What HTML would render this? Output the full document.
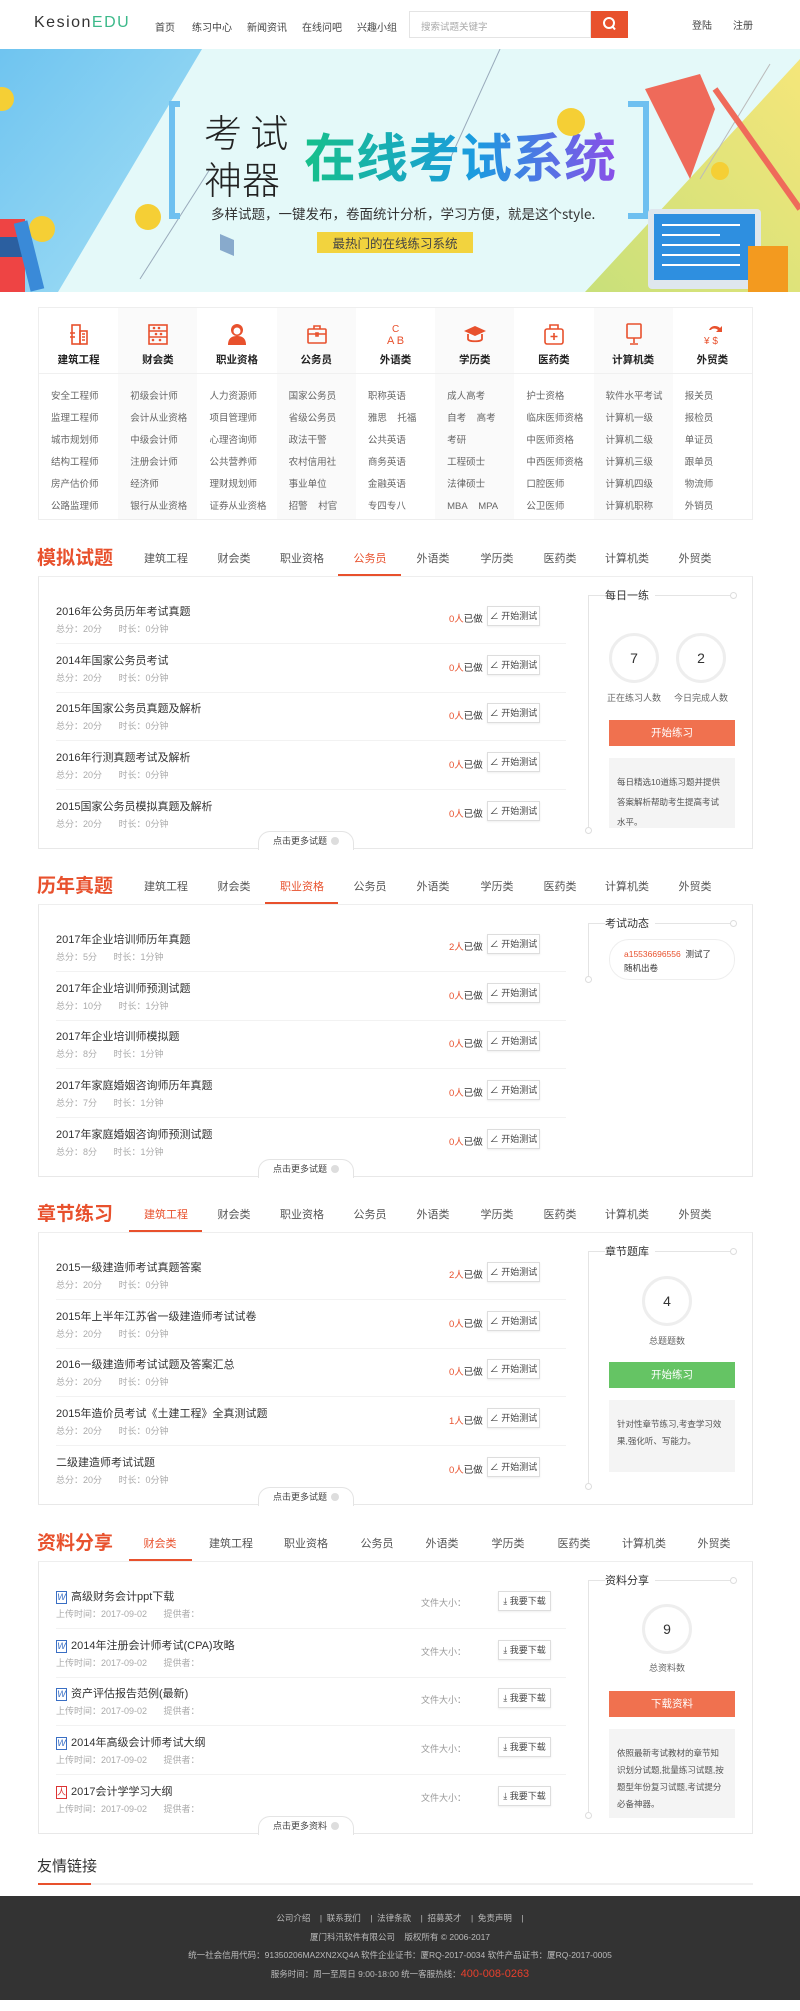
<!DOCTYPE html>
<html><head><meta charset="utf-8">
<style>
*{margin:0;padding:0;box-sizing:border-box}
body{width:800px;height:2011px;background:#fff;font-family:"Liberation Sans","Noto Sans CJK SC",sans-serif;position:relative;overflow:hidden;color:#333}
.a{position:absolute;white-space:nowrap}
.nav{font-size:10px;color:#444;top:19px}
.cat{position:absolute;top:307px;left:38px;width:715px;height:213px;border:1px solid #eee;display:flex}
.col{width:79.4px;height:100%;position:relative}
.col.s{background:#fafafa}
.col .ic{position:absolute;top:14px;left:28px;width:24px;height:24px}
.col .h{position:absolute;top:44px;width:100%;text-align:center;font-size:10.5px;font-weight:bold;color:#222}
.col .hr{position:absolute;top:65px;left:0;width:100%;height:1px;background:#f0f0f0}
.col ul{list-style:none;position:absolute;top:78px;left:12px;font-size:9.5px;color:#666;line-height:22px}
.sec{position:absolute;left:0;width:800px;height:300px}
.sec .t{position:absolute;left:37px;top:-33px;font-size:19px;font-weight:bold;color:#e8512d}
.sec .tab{position:absolute;top:-26px;font-size:11px;color:#555;transform:translateX(-50%)}
.sec .tab.on{color:#e8512d}
.sec .ul{position:absolute;top:-2px;height:2px;background:#e8512d}
.sec .box{position:absolute;left:38px;top:0;width:715px;height:273px;border:1px solid #e8e8e8;border-top-color:#eee}
.it{position:absolute;left:56px;width:510px;height:41px;border-bottom:1px solid #f2f2f2}
.it .n{position:absolute;left:0;top:0;font-size:11px;color:#333}
.it .m{position:absolute;left:0;top:19px;font-size:9px;color:#aaa;word-spacing:14px}
.it .c{position:absolute;left:393px;top:8px;font-size:9.5px;color:#333}
.it .c b{font-weight:normal;color:#e8512d}
.it .bt{position:absolute;left:431px;top:3px;width:53px;height:20px;border:1px solid #ddd;font-size:9px;color:#444;text-align:center;line-height:18px;box-shadow:0 1px 2px #eee}
.vl{position:absolute;left:588px;width:1px;background:#e4e4e4}
.rh{position:absolute;left:605px;font-size:11px;color:#333;background:#fff;padding-right:6px}
.hl{position:absolute;left:588px;width:145px;height:1px;background:#e4e4e4}
.dot{position:absolute;width:7px;height:7px;border:1px solid #ddd;border-radius:50%;background:#fff}
.cir{position:absolute;width:50px;height:50px;border:3px solid #eee;border-radius:50%;text-align:center;line-height:44px;font-size:14px;color:#333}
.lab{position:absolute;font-size:9px;color:#666;transform:translateX(-50%)}
.btn{position:absolute;left:609px;width:126px;height:26px;color:#fff;font-size:10.5px;text-align:center;line-height:26px}
.gb{position:absolute;left:609px;width:126px;background:#f4f4f4;font-size:8.5px;color:#555;line-height:20px;padding:14px 8px}
.more{position:absolute;left:258px;top:255px;width:96px;height:19px;border:1px solid #e4e4e4;border-bottom:none;border-radius:12px 12px 0 0;background:#fff;font-size:9px;color:#444;text-align:center;line-height:18px}
.more i{display:inline-block;width:8px;height:8px;border-radius:50%;background:#ddd;margin-left:4px;vertical-align:-1px}
.wi{display:inline-block;width:11px;height:13px;border:1px solid #3a6fc4;color:#3a6fc4;font-size:9px;font-style:italic;line-height:11px;text-align:center;margin-right:4px;vertical-align:0}
.fs{position:absolute;left:365px;top:8px;font-size:9px;color:#999}
.dl{position:absolute;left:442px;top:3px;width:53px;height:20px;border:1px solid #ddd;font-size:9px;color:#444;text-align:center;line-height:18px;box-shadow:0 1px 2px #eee}
.foot{position:absolute;left:0;top:1896px;width:800px;height:104px;background:#333;color:#bbb;font-size:8.5px;text-align:center}
.foot div{position:absolute;left:0;width:800px}
</style></head><body>

<!-- header -->
<div class="a" style="left:34px;top:14px;font-size:16px;letter-spacing:1.5px;color:#333">Kesion<span style="color:#3cb98a">EDU</span></div>
<div class="a nav" style="left:155px">首页</div>
<div class="a nav" style="left:192px">练习中心</div>
<div class="a nav" style="left:247px">新闻资讯</div>
<div class="a nav" style="left:302px">在线问吧</div>
<div class="a nav" style="left:357px">兴趣小组</div>
<div class="a" style="left:409px;top:11px;width:182px;height:27px;border:1px solid #e4e4e4;font-size:9.5px;color:#aaa;padding:7px 11px">搜索试题关键字</div>
<div class="a" style="left:591px;top:11px;width:37px;height:27px;background:#e8512d">
<svg width="37" height="27"><circle cx="18" cy="12" r="5" fill="none" stroke="#fff" stroke-width="2"/><path d="M21.5 15.5L24 18.5" stroke="#fff" stroke-width="2"/></svg></div>
<div class="a nav" style="left:692px;top:17px">登陆</div>
<div class="a nav" style="left:733px;top:17px">注册</div>

<!-- banner -->
<svg class="a" style="left:0;top:49px" width="800" height="243" viewBox="0 0 800 243">
<defs><linearGradient id="g1" x1="0" x2="1"><stop offset="0" stop-color="#16c08a"/><stop offset=".55" stop-color="#1b9be0"/><stop offset="1" stop-color="#8a4ee8"/></linearGradient>
<linearGradient id="g2" x1="0" y1="0" x2="1" y2="1"><stop offset="0" stop-color="#6fc4f0"/><stop offset="1" stop-color="#a6e0f5"/></linearGradient>
<linearGradient id="g3" x1="0" y1="1" x2="1" y2="0"><stop offset="0" stop-color="#c8e07a"/><stop offset="1" stop-color="#f5e67a"/></linearGradient></defs>
<rect width="800" height="243" fill="#e4f9f9"/>
<polygon points="0,0 202,0 58,243 0,243" fill="url(#g2)"/>
<polygon points="585,243 800,10 800,243" fill="url(#g3)"/>
<line x1="140" y1="230" x2="210" y2="120" stroke="#9ab" stroke-width="1"/>
<line x1="450" y1="110" x2="500" y2="0" stroke="#9ab"/>
<line x1="700" y1="130" x2="770" y2="15" stroke="#bbb"/>
<path d="M180 55H172V167H180" fill="none" stroke="#6ec0f0" stroke-width="6"/>
<path d="M628 55H646V167H628" fill="none" stroke="#6ec0f0" stroke-width="6"/>
<text x="204" y="98" font-size="38" fill="#222" font-family="Noto Sans CJK SC" font-weight="300">考 试</text>
<text x="204" y="145" font-size="38" fill="#222" font-family="Noto Sans CJK SC" font-weight="300">神器</text>
<text x="304" y="128" font-size="52" font-weight="bold" fill="url(#g1)" font-family="Noto Sans CJK SC">在线考试系统</text>
<text x="211" y="170" font-size="13.5" fill="#333" font-family="Noto Sans CJK SC">多样试题，一键发布，卷面统计分析，学习方便，就是这个style.</text>
<rect x="317" y="183" width="156" height="21" fill="#f2d33e"/>
<text x="395" y="199" font-size="12.5" fill="#444" text-anchor="middle" font-family="Noto Sans CJK SC">最热门的在线练习系统</text>
<circle cx="571" cy="73" r="14" fill="#f5cf35"/><circle cx="148" cy="168" r="13" fill="#f5cf35"/>
<circle cx="42" cy="180" r="13" fill="#f5cf35"/><circle cx="720" cy="122" r="9" fill="#f5cf35"/><circle cx="2" cy="50" r="12" fill="#f5cf35"/>
<polygon points="645,40 700,25 715,60 690,130" fill="#ef6a5a"/>
<line x1="715" y1="40" x2="800" y2="160" stroke="#ef6a5a" stroke-width="6"/>
<rect x="648" y="160" width="113" height="80" rx="4" fill="#dfe7ee"/>
<rect x="654" y="165" width="101" height="66" fill="#2e8fe0"/>
<g stroke="#fff" stroke-width="2"><line x1="662" y1="176" x2="740" y2="176"/><line x1="662" y1="186" x2="720" y2="186"/><line x1="662" y1="196" x2="740" y2="196"/><line x1="662" y1="206" x2="740" y2="206"/><line x1="662" y1="216" x2="740" y2="216"/></g>
<rect x="748" y="197" width="40" height="46" fill="#f39a1f"/>
<rect x="0" y="170" width="25" height="73" fill="#e44"/><rect x="0" y="188" width="25" height="20" fill="#2b5fa0"/>
<rect x="22" y="172" width="14" height="70" fill="#3a8ad8" transform="rotate(-14 29 207)"/>
<path d="M220 185l14 6 0 16-14-6z" fill="#8ac"/>
</svg>

<!-- categories -->
<div class="cat">
<div class="col"><svg class="ic" viewBox="0 0 24 24" fill="none" stroke="#e8512d" stroke-width="1.6"><rect x="5" y="3" width="8" height="19"/><rect x="13" y="9" width="7" height="13"/><path d="M3 11h5M3 15h5M15 12h3M15 15h3M15 18h3"/></svg><div class="h">建筑工程</div><div class="hr"></div><ul><li>安全工程师</li><li>监理工程师</li><li>城市规划师</li><li>结构工程师</li><li>房产估价师</li><li>公路监理师</li></ul></div>
<div class="col s"><svg class="ic" viewBox="0 0 24 24" fill="none" stroke="#e8512d" stroke-width="1.6"><rect x="3" y="3" width="18" height="19"/><path d="M3 9h18M3 15h18"/><g fill="#e8512d" stroke="none"><circle cx="8" cy="6" r="1.3"/><circle cx="13" cy="6" r="1.3"/><circle cx="10" cy="12" r="1.3"/><circle cx="15" cy="12" r="1.3"/><circle cx="7" cy="18" r="1.3"/><circle cx="14" cy="18" r="1.3"/></g></svg><div class="h">财会类</div><div class="hr"></div><ul><li>初级会计师</li><li>会计从业资格</li><li>中级会计师</li><li>注册会计师</li><li>经济师</li><li>银行从业资格</li></ul></div>
<div class="col"><svg class="ic" viewBox="0 0 24 24" fill="#e8512d"><circle cx="12" cy="8" r="6"/><path d="M3 23c0-7 4-9 9-9s9 2 9 9z"/><circle cx="12" cy="9" r="3.5" fill="#fff"/></svg><div class="h">职业资格</div><div class="hr"></div><ul><li>人力资源师</li><li>项目管理师</li><li>心理咨询师</li><li>公共营养师</li><li>理财规划师</li><li>证券从业资格</li></ul></div>
<div class="col s"><svg class="ic" viewBox="0 0 24 24" fill="none" stroke="#e8512d" stroke-width="1.6"><rect x="3" y="7" width="18" height="14" rx="1"/><path d="M9 7V4h6v3M3 12h18M11 11h2v3h-2z"/></svg><div class="h">公务员</div><div class="hr"></div><ul><li>国家公务员</li><li>省级公务员</li><li>政法干警</li><li>农村信用社</li><li>事业单位</li><li>招警&nbsp;&nbsp;&nbsp;&nbsp;村官</li></ul></div>
<div class="col"><svg class="ic" viewBox="0 0 24 24"><text x="8" y="10" font-size="10" fill="#e8512d">C</text><text x="3" y="22" font-size="11" fill="#e8512d">A B</text></svg><div class="h">外语类</div><div class="hr"></div><ul><li>职称英语</li><li>雅思&nbsp;&nbsp;&nbsp;&nbsp;托福</li><li>公共英语</li><li>商务英语</li><li>金融英语</li><li>专四专八</li></ul></div>
<div class="col s"><svg class="ic" viewBox="0 0 24 24"><path d="M1 9l11-5 11 5-11 5z" fill="#e8512d"/><path d="M5 12v5c0 3 14 3 14 0v-5" fill="none" stroke="#e8512d" stroke-width="1.8"/></svg><div class="h">学历类</div><div class="hr"></div><ul><li>成人高考</li><li>自考&nbsp;&nbsp;&nbsp;&nbsp;高考</li><li>考研</li><li>工程硕士</li><li>法律硕士</li><li>MBA&nbsp;&nbsp;&nbsp;&nbsp;MPA</li></ul></div>
<div class="col"><svg class="ic" viewBox="0 0 24 24" fill="none" stroke="#e8512d" stroke-width="1.6"><rect x="3" y="7" width="18" height="15" rx="2"/><path d="M8 7V3h8v4M12 11v7M8.5 14.5h7"/></svg><div class="h">医药类</div><div class="hr"></div><ul><li>护士资格</li><li>临床医师资格</li><li>中医师资格</li><li>中西医师资格</li><li>口腔医师</li><li>公卫医师</li></ul></div>
<div class="col s"><svg class="ic" viewBox="0 0 24 24" fill="none" stroke="#e8512d" stroke-width="1.6"><rect x="5" y="2" width="14" height="14" rx="1"/><path d="M12 16v5M8 22h8"/></svg><div class="h">计算机类</div><div class="hr"></div><ul><li>软件水平考试</li><li>计算机一级</li><li>计算机二级</li><li>计算机三级</li><li>计算机四级</li><li>计算机职称</li></ul></div>
<div class="col"><svg class="ic" viewBox="0 0 24 24"><path d="M8 8c2-5 8-5 11-2l2-2v6h-6l2-2c-2-2-6-2-7 0z" fill="#e8512d"/><text x="3" y="22" font-size="10" fill="#e8512d">¥ $</text></svg><div class="h">外贸类</div><div class="hr"></div><ul><li>报关员</li><li>报检员</li><li>单证员</li><li>跟单员</li><li>物流师</li><li>外销员</li></ul></div>
</div>

<!-- section 1 -->
<div class="sec" style="top:576px">
<div class="t">模拟试题</div>
<div class="tab" style="left:166px">建筑工程</div><div class="tab" style="left:234px">财会类</div><div class="tab" style="left:302px">职业资格</div><div class="tab on" style="left:370px">公务员</div><div class="tab" style="left:433px">外语类</div><div class="tab" style="left:497px">学历类</div><div class="tab" style="left:560px">医药类</div><div class="tab" style="left:627px">计算机类</div><div class="tab" style="left:695px">外贸类</div>
<div class="box"></div><div class="ul" style="left:338px;width:63px"></div>
<div class="it" style="top:27px"><div class="n">2016年公务员历年考试真题</div><div class="m">总分：20分 时长：0分钟</div><div class="c"><b>0人</b>已做</div><div class="bt">∠ 开始测试</div></div>
<div class="it" style="top:76px"><div class="n">2014年国家公务员考试</div><div class="m">总分：20分 时长：0分钟</div><div class="c"><b>0人</b>已做</div><div class="bt">∠ 开始测试</div></div>
<div class="it" style="top:124px"><div class="n">2015年国家公务员真题及解析</div><div class="m">总分：20分 时长：0分钟</div><div class="c"><b>0人</b>已做</div><div class="bt">∠ 开始测试</div></div>
<div class="it" style="top:173px"><div class="n">2016年行测真题考试及解析</div><div class="m">总分：20分 时长：0分钟</div><div class="c"><b>0人</b>已做</div><div class="bt">∠ 开始测试</div></div>
<div class="it" style="top:222px;border:none"><div class="n">2015国家公务员模拟真题及解析</div><div class="m">总分：20分 时长：0分钟</div><div class="c"><b>0人</b>已做</div><div class="bt">∠ 开始测试</div></div>
<div class="more">点击更多试题<i></i></div>
<div class="vl" style="top:19px;height:235px"></div><div class="hl" style="top:19px"></div><div class="dot" style="left:730px;top:16px"></div><div class="dot" style="left:585px;top:251px"></div>
<div class="rh" style="top:11px">每日一练</div>
<div class="cir" style="left:609px;top:57px">7</div><div class="cir" style="left:676px;top:57px">2</div>
<div class="lab" style="left:634px;top:115px">正在练习人数</div><div class="lab" style="left:701px;top:115px">今日完成人数</div>
<div class="btn" style="top:144px;background:#f0714f">开始练习</div>
<div class="gb" style="top:182px;height:70px;padding-top:14px">每日精选10道练习题并提供答案解析帮助考生提高考试水平。</div>
</div>

<!-- section 2 -->
<div class="sec" style="top:904px">
<div class="t">历年真题</div>
<div class="tab" style="left:166px">建筑工程</div><div class="tab" style="left:234px">财会类</div><div class="tab on" style="left:302px">职业资格</div><div class="tab" style="left:370px">公务员</div><div class="tab" style="left:433px">外语类</div><div class="tab" style="left:497px">学历类</div><div class="tab" style="left:560px">医药类</div><div class="tab" style="left:627px">计算机类</div><div class="tab" style="left:695px">外贸类</div>
<div class="box"></div><div class="ul" style="left:265px;width:73px"></div>
<div class="it" style="top:27px"><div class="n">2017年企业培训师历年真题</div><div class="m">总分：5分 时长：1分钟</div><div class="c"><b>2人</b>已做</div><div class="bt">∠ 开始测试</div></div>
<div class="it" style="top:76px"><div class="n">2017年企业培训师预测试题</div><div class="m">总分：10分 时长：1分钟</div><div class="c"><b>0人</b>已做</div><div class="bt">∠ 开始测试</div></div>
<div class="it" style="top:124px"><div class="n">2017年企业培训师模拟题</div><div class="m">总分：8分 时长：1分钟</div><div class="c"><b>0人</b>已做</div><div class="bt">∠ 开始测试</div></div>
<div class="it" style="top:173px"><div class="n">2017年家庭婚姻咨询师历年真题</div><div class="m">总分：7分 时长：1分钟</div><div class="c"><b>0人</b>已做</div><div class="bt">∠ 开始测试</div></div>
<div class="it" style="top:222px;border:none"><div class="n">2017年家庭婚姻咨询师预测试题</div><div class="m">总分：8分 时长：1分钟</div><div class="c"><b>0人</b>已做</div><div class="bt">∠ 开始测试</div></div>
<div class="more">点击更多试题<i></i></div>
<div class="vl" style="top:19px;height:56px"></div><div class="hl" style="top:19px"></div><div class="dot" style="left:730px;top:16px"></div><div class="dot" style="left:585px;top:72px"></div>
<div class="rh" style="top:11px">考试动态</div>
<div class="a" style="left:609px;top:35px;width:126px;height:41px;border:1px solid #eee;border-radius:20px;font-size:8.5px;padding:7px 0 0 14px;line-height:14px;color:#333"><span style="color:#e8512d">a15536696556</span>&nbsp;&nbsp;测试了<br>随机出卷</div>
</div>

<!-- section 3 -->
<div class="sec" style="top:1232px">
<div class="t">章节练习</div>
<div class="tab on" style="left:166px">建筑工程</div><div class="tab" style="left:234px">财会类</div><div class="tab" style="left:302px">职业资格</div><div class="tab" style="left:370px">公务员</div><div class="tab" style="left:433px">外语类</div><div class="tab" style="left:497px">学历类</div><div class="tab" style="left:560px">医药类</div><div class="tab" style="left:627px">计算机类</div><div class="tab" style="left:695px">外贸类</div>
<div class="box"></div><div class="ul" style="left:129px;width:73px"></div>
<div class="it" style="top:27px"><div class="n">2015一级建造师考试真题答案</div><div class="m">总分：20分 时长：0分钟</div><div class="c"><b>2人</b>已做</div><div class="bt">∠ 开始测试</div></div>
<div class="it" style="top:76px"><div class="n">2015年上半年江苏省一级建造师考试试卷</div><div class="m">总分：20分 时长：0分钟</div><div class="c"><b>0人</b>已做</div><div class="bt">∠ 开始测试</div></div>
<div class="it" style="top:124px"><div class="n">2016一级建造师考试试题及答案汇总</div><div class="m">总分：20分 时长：0分钟</div><div class="c"><b>0人</b>已做</div><div class="bt">∠ 开始测试</div></div>
<div class="it" style="top:173px"><div class="n">2015年造价员考试《土建工程》全真测试题</div><div class="m">总分：20分 时长：0分钟</div><div class="c"><b>1人</b>已做</div><div class="bt">∠ 开始测试</div></div>
<div class="it" style="top:222px;border:none"><div class="n">二级建造师考试试题</div><div class="m">总分：20分 时长：0分钟</div><div class="c"><b>0人</b>已做</div><div class="bt">∠ 开始测试</div></div>
<div class="more">点击更多试题<i></i></div>
<div class="vl" style="top:19px;height:235px"></div><div class="hl" style="top:19px"></div><div class="dot" style="left:730px;top:16px"></div><div class="dot" style="left:585px;top:251px"></div>
<div class="rh" style="top:11px">章节题库</div>
<div class="cir" style="left:642px;top:44px">4</div>
<div class="lab" style="left:667px;top:102px">总题题数</div>
<div class="btn" style="top:130px;background:#65c464">开始练习</div>
<div class="gb" style="top:168px;height:72px;padding-top:16px;line-height:17px">针对性章节练习,考查学习效果,强化听、写能力。</div>
</div>

<!-- section 4 -->
<div class="sec" style="top:1561px">
<div class="t">资料分享</div>
<div class="tab on" style="left:160px">财会类</div><div class="tab" style="left:231px">建筑工程</div><div class="tab" style="left:306px">职业资格</div><div class="tab" style="left:377px">公务员</div><div class="tab" style="left:442px">外语类</div><div class="tab" style="left:508px">学历类</div><div class="tab" style="left:574px">医药类</div><div class="tab" style="left:644px">计算机类</div><div class="tab" style="left:714px">外贸类</div>
<div class="box"></div><div class="ul" style="left:129px;width:63px"></div>
<div class="it" style="top:27px"><div class="n"><span class="wi">W</span>高级财务会计ppt下载</div><div class="m">上传时间：2017-09-02 提供者：</div><div class="fs">文件大小：</div><div class="dl">⤓ 我要下载</div></div>
<div class="it" style="top:76px"><div class="n"><span class="wi">W</span>2014年注册会计师考试(CPA)攻略</div><div class="m">上传时间：2017-09-02 提供者：</div><div class="fs">文件大小：</div><div class="dl">⤓ 我要下载</div></div>
<div class="it" style="top:124px"><div class="n"><span class="wi">W</span>资产评估报告范例(最新)</div><div class="m">上传时间：2017-09-02 提供者：</div><div class="fs">文件大小：</div><div class="dl">⤓ 我要下载</div></div>
<div class="it" style="top:173px"><div class="n"><span class="wi">W</span>2014年高级会计师考试大纲</div><div class="m">上传时间：2017-09-02 提供者：</div><div class="fs">文件大小：</div><div class="dl">⤓ 我要下载</div></div>
<div class="it" style="top:222px;border:none"><div class="n"><span class="wi" style="border-color:#d33;color:#d33;font-style:normal">人</span>2017会计学学习大纲</div><div class="m">上传时间：2017-09-02 提供者：</div><div class="fs">文件大小：</div><div class="dl">⤓ 我要下载</div></div>
<div class="more">点击更多资料<i></i></div>
<div class="vl" style="top:19px;height:235px"></div><div class="hl" style="top:19px"></div><div class="dot" style="left:730px;top:16px"></div><div class="dot" style="left:585px;top:251px"></div>
<div class="rh" style="top:11px">资料分享</div>
<div class="cir" style="left:642px;top:43px">9</div>
<div class="lab" style="left:667px;top:100px">总资料数</div>
<div class="btn" style="top:130px;background:#f0714f">下载资料</div>
<div class="gb" style="top:168px;height:89px;padding-top:16px;line-height:17px">依照最新考试教材的章节知识划分试题,批量练习试题,按题型年份复习试题,考试提分必备神器。</div>
</div>

<!-- links -->
<div class="a" style="left:37px;top:1855px;font-size:15px;color:#333">友情链接</div>
<div class="a" style="left:38px;top:1883px;width:715px;height:2px;background:#f0f0f0"></div>
<div class="a" style="left:38px;top:1883px;width:53px;height:2px;background:#e8512d"></div>

<div class="foot">
<div style="top:16px">公司介绍&nbsp;&nbsp;&nbsp;&nbsp;|&nbsp;&nbsp;联系我们&nbsp;&nbsp;&nbsp;&nbsp;|&nbsp;&nbsp;法律条款&nbsp;&nbsp;&nbsp;&nbsp;|&nbsp;&nbsp;招募英才&nbsp;&nbsp;&nbsp;&nbsp;|&nbsp;&nbsp;免责声明&nbsp;&nbsp;&nbsp;&nbsp;|</div>
<div style="top:35px">厦门科汛软件有限公司&nbsp;&nbsp;&nbsp;&nbsp;版权所有 © 2006-2017</div>
<div style="top:53px">统一社会信用代码：91350206MA2XN2XQ4A 软件企业证书：厦RQ-2017-0034 软件产品证书：厦RQ-2017-0005</div>
<div style="top:72px">服务时间：周一至周日 9:00-18:00 统一客服热线：<span style="color:#e8402d;font-size:11px">400-008-0263</span></div>
</div>
</body></html>
